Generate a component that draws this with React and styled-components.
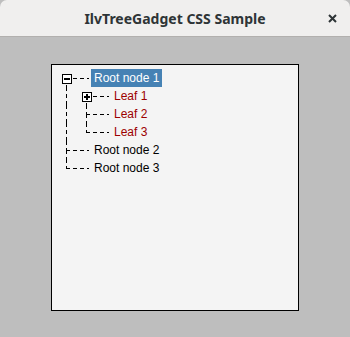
import styled, { createGlobalStyle } from 'styled-components'

const GlobalStyle = createGlobalStyle`
  html, body { margin: 0; padding: 0; background: #ffffff; }
  #root { width: 350px; height: 337px; }
`;

const DASH_H = 'repeating-linear-gradient(to right, #000 0 4px, transparent 4px 7px)';
const DASH_V = 'repeating-linear-gradient(to bottom, #000 0 4px, transparent 4px 7px)';

const Window = styled.div`
  width: 350px;
  height: 337px;
  display: flex;
  flex-direction: column;
  background: #bebebe;
  overflow: hidden;
`;

const TitleBar = styled.div`
  height: 36px;
  flex: none;
  display: grid;
  grid-template-columns: 1fr auto 1fr;
  align-items: center;
  background: #f0efee;
  border-bottom: 1px solid #b2b0ae;
  border-radius: 7px 7px 0 0;
`;

const Title = styled.div`
  grid-column: 2;
  font-family: "Noto Sans", "DejaVu Sans", sans-serif;
  font-weight: 700;
  font-size: 14px;
  color: #2e3436;
`;

const CloseButton = styled.div`
  grid-column: 3;
  justify-self: end;
  margin-right: 13px;
  width: 9px;
  height: 9px;
  display: flex;
`;

const Body = styled.div`
  flex: 1;
  display: flex;
  align-items: center;
  justify-content: center;
`;

const Panel = styled.div`
  width: 242px;
  height: 241px;
  border: 1px solid #000;
  background: #f4f4f4;
  padding: 4px 0 0 4px;
  display: flex;
  flex-direction: column;
`;

const Row = styled.div`
  height: 18px;
  display: flex;
  align-items: stretch;
`;

const Gutter = styled.div`
  position: relative;
  width: ${p => (p.$own ? 35 : 20)}px;
  flex: none;
`;

const VLine = styled.span`
  position: absolute;
  left: 10px;
  width: 1px;
  top: ${p => p.$from}px;
  height: ${p => p.$to - p.$from}px;
  background: ${DASH_V};
`;

const HLine = styled.span`
  position: absolute;
  top: 9px;
  left: 10px;
  right: 2px;
  height: 1px;
  background: ${DASH_H};
`;

const Toggle = styled.svg`
  position: absolute;
  left: 6px;
  top: 5px;
  width: 10px;
  height: 10px;
`;

const Label = styled.span`
  font-family: "Liberation Sans", Arial, sans-serif;
  font-size: 12px;
  line-height: 18px;
  padding: 0 3px;
  white-space: nowrap;
  color: ${p => (p.$selected ? '#ffffff' : p.$leaf ? '#9c0000' : '#000000')};
  background: ${p => (p.$selected ? '#4682b4' : 'transparent')};
`;

function ToggleBox({ open }) {
  return (
    <Toggle viewBox="0 0 10 10">
      <rect x="0.5" y="0.5" width="9" height="9" fill="#fff" stroke="#000" strokeWidth="1" />
      <rect x="2" y="4" width="6" height="2" fill="#000" />
      {!open && <rect x="4" y="2" width="2" height="6" fill="#000" />}
    </Toggle>
  );
}

const rows = [
  { label: 'Root node 1', level: 0, first: true, last: false, toggle: 'open', selected: true, anc: [] },
  { label: 'Leaf 1', level: 1, first: true, last: false, toggle: 'closed', leaf: true, anc: [true] },
  { label: 'Leaf 2', level: 1, first: false, last: false, leaf: true, anc: [true] },
  { label: 'Leaf 3', level: 1, first: false, last: true, leaf: true, anc: [true] },
  { label: 'Root node 2', level: 0, first: false, last: false, anc: [] },
  { label: 'Root node 3', level: 0, first: false, last: true, anc: [] },
];

function TreeRow({ row }) {
  return (
    <Row>
      {row.anc.map((cont, i) => (
        <Gutter key={i}>{cont && <VLine $from={0} $to={18} />}</Gutter>
      ))}
      <Gutter $own>
        <HLine />
        {!row.first && <VLine $from={0} $to={10} />}
        {!row.last && <VLine $from={9} $to={18} />}
        {row.toggle && <ToggleBox open={row.toggle === 'open'} />}
      </Gutter>
      <Label $selected={row.selected} $leaf={row.leaf}>{row.label}</Label>
    </Row>
  );
}

export default function App() {
  return (
    <>
      <GlobalStyle />
      <Window>
        <TitleBar>
          <Title>IlvTreeGadget CSS Sample</Title>
          <CloseButton>
            <svg width="9" height="9" viewBox="0 0 9 9">
              <path d="M1 1 L8 8 M8 1 L1 8" stroke="#2e3436" strokeWidth="2" />
            </svg>
          </CloseButton>
        </TitleBar>
        <Body>
          <Panel>
            {rows.map(r => <TreeRow key={r.label} row={r} />)}
          </Panel>
        </Body>
      </Window>
    </>
  );
}
